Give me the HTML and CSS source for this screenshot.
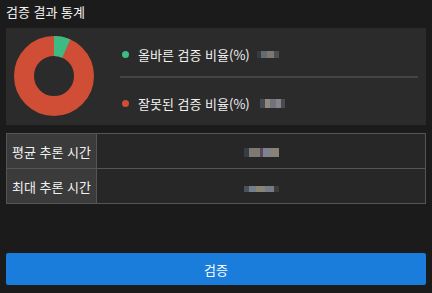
FILE: index.html
```html
<!DOCTYPE html>
<html lang="ko">
<head>
    <meta charset="UTF-8">
    <meta name="viewport" content="width=device-width, initial-scale=1.0">
    <title>검증 결과 통계</title>
    <link rel="stylesheet" href="styles.css">
</head>
<body>
    <div class="page">
        <h1 class="title">검증 결과 통계</h1>
        <div class="stats-card">
            <svg class="donut" width="80" height="80" viewBox="0 0 80 80">
                <circle cx="40" cy="40" r="30" fill="none" stroke="#cf4e35" stroke-width="20"/>
                <circle cx="40" cy="40" r="30" fill="none" stroke="#3dbb83" stroke-width="20"
                        stroke-dasharray="12.6 176" transform="rotate(-90 40 40)"/>
            </svg>
            <div class="legend">
                <div class="legend-item">
                    <span class="dot dot-ok"></span>
                    <span class="legend-label">올바른 검증 비율(%)</span>
                    <span class="blur-value v1"></span>
                </div>
                <div class="legend-divider"></div>
                <div class="legend-item second">
                    <span class="dot dot-bad"></span>
                    <span class="legend-label">잘못된 검증 비율(%)</span>
                    <span class="blur-value v2"></span>
                </div>
            </div>
        </div>
        <table class="time-table">
            <tr>
                <th>평균 추론 시간</th>
                <td><span class="blur-value v3"></span></td>
            </tr>
            <tr>
                <th>최대 추론 시간</th>
                <td><span class="blur-value v4"></span></td>
            </tr>
        </table>
        <button class="verify-btn">검증</button>
    </div>
</body>
</html>
```

FILE: styles.css
```css
body {
    margin: 0;
    background-color: #1b1b1b;
    font-family: "Noto Sans CJK KR", "Noto Sans", sans-serif;
    color: #f2f2f2;
}
.page {
    height: 293px;
    box-sizing: border-box;
    padding: 0 6px 8px;
    display: flex;
    flex-direction: column;
}
.title {
    margin: 0;
    height: 28px;
    line-height: 24px;
    font-size: 13px;
    font-weight: normal;
}
.stats-card {
    height: 97px;
    box-sizing: border-box;
    background-color: #2b2b2b;
    padding: 6px 8px 2px;
    display: flex;
    align-items: flex-start;
}
.donut {
    margin-top: 2px;
    flex-shrink: 0;
}
.legend {
    flex: 1;
    margin-left: 26px;
    display: flex;
    flex-direction: column;
}
.legend-item {
    height: 40px;
    display: flex;
    align-items: center;
    font-size: 13px;
}
.legend-item.second {
    margin-top: 5px;
}
.legend-divider {
    margin-top: 2px;
    height: 2px;
    background-color: #454545;
}
.dot {
    width: 7px;
    height: 7px;
    border-radius: 50%;
    margin-left: 2px;
    margin-right: 9px;
}
.dot-ok {
    background-color: #3dbb83;
}
.dot-bad {
    background-color: #cf4e35;
}
.blur-value {
    display: inline-block;
    height: 7px;
    opacity: 0.75;
}
.v1 {
    width: 22px;
    margin-left: 7px;
    background: linear-gradient(90deg, #3a4046 0 20%, #76808a 20% 45%, #9a8f8a 45% 75%, #5b5a5e 75%);
}
.v2 {
    width: 25px;
    margin-left: 10px;
    height: 9px;
    background: linear-gradient(90deg, #4c5662 0 20%, #b0a89a 20% 40%, #8a8a96 40% 65%, #a59fae 65% 85%, #55545c 85%);
}
.time-table {
    margin-top: 8px;
    width: 100%;
    border-collapse: collapse;
    border: 1px solid #555;
    font-size: 13px;
}
.time-table th {
    width: 77px;
    height: 34px;
    padding: 0 5px;
    text-align: left;
    font-weight: normal;
    background-color: #3b3b3b;
    border: 1px solid #555;
    white-space: nowrap;
}
.time-table td {
    text-align: center;
    background-color: #272727;
    border: 1px solid #555;
}
.v3 {
    width: 35px;
    height: 9px;
    background: linear-gradient(90deg, #3a4650 0 15%, #9a958c 15% 45%, #6c5564 45% 55%, #9aa0b4 55% 75%, #a8a092 75%);
}
.v4 {
    width: 35px;
    height: 6px;
    background: linear-gradient(90deg, #55606e 0 15%, #8a9cac 15% 35%, #a8a48a 35% 60%, #8c98a8 60% 85%, #4a4038 85%);
}
.verify-btn {
    margin-top: auto;
    height: 32px;
    border: none;
    border-radius: 2px;
    background-color: #1a7ddb;
    color: #ffffff;
    font-family: "Noto Sans CJK KR", "Noto Sans", sans-serif;
    font-size: 13px;
    cursor: pointer;
}
```
